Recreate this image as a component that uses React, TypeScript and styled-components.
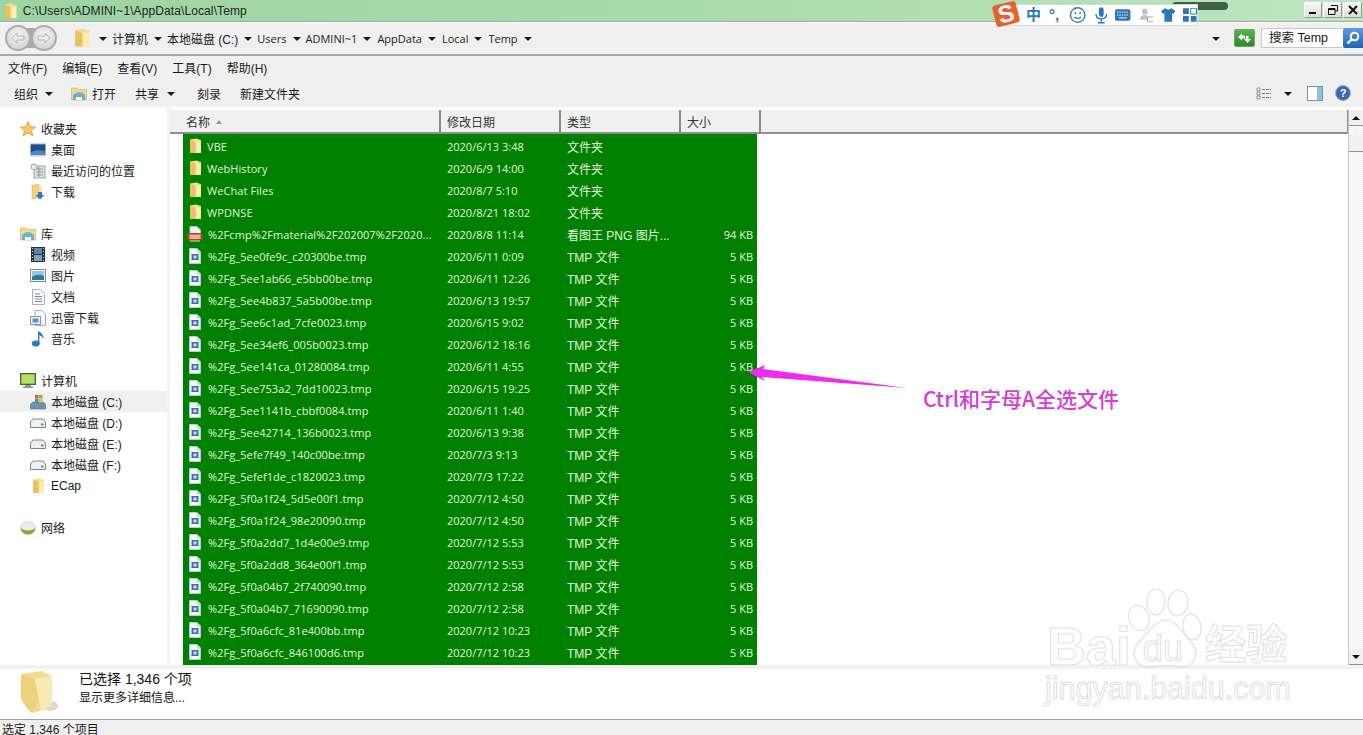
import React from "react";
import styled, { createGlobalStyle } from "styled-components";

const latin = `"Open Sans", "Noto Sans CJK SC", sans-serif`;

const GlobalStyle = createGlobalStyle`
  html, body {
    margin: 0;
    padding: 0;
    background: #fff;
  }
  body {
    font-family: "Liberation Sans", "Noto Sans CJK SC", sans-serif;
    font-size: 12px;
    color: #1a1a1a;
  }
`;

const Window = styled.div`
  position: relative;
  width: 1363px;
  height: 735px;
  overflow: hidden;
  display: flex;
  flex-direction: column;
  background: #fff;
`;

const TitleBar = styled.div`
  height: 21px;
  flex: none;
  display: flex;
  align-items: center;
  gap: 6px;
  padding-left: 4px;
  background: linear-gradient(90deg, #9dd4a3 0%, #a8dbad 50%, #bce6bf 100%);
`;

const TitleText = styled.span`
  font-size: 12px;
  letter-spacing: 0.1px;
  color: #222;
  flex: 1;
`;

const WindowControls = styled.div`
  display: flex;
  gap: 1px;
  margin: 0 1px 2px 0;
`;

const WinButton = styled.div<{ $w: number }>`
  width: ${(p) => p.$w}px;
  height: 16px;
  display: flex;
  align-items: center;
  justify-content: center;
  background: linear-gradient(#f8f8f8, #dcdcdc);
  border: 1px solid #8aa08c;
  border-top-color: #fff;
  border-left-color: #fff;
  box-sizing: border-box;
`;

const AddressBar = styled.div`
  height: 35px;
  flex: none;
  box-sizing: border-box;
  display: flex;
  align-items: center;
  background: #f0f0f0;
  border-top: 1px solid #a6a6a6;
  border-bottom: 2px solid #a8a8a8;
  box-shadow: inset 0 1px 0 #fff;
`;

const NavGroup = styled.div`
  display: flex;
  margin: 0 17px 0 5px;
  background: linear-gradient(#a9a9a9, #a9a9a9) center / 20px 20px no-repeat;
`;

const NavButton = styled.div`
  width: 26px;
  height: 26px;
  box-sizing: border-box;
  border-radius: 50%;
  border: 2px solid #acacac;
  background: radial-gradient(circle at 50% 35%, #f4f4f4, #d8d8d8 75%);
  display: flex;
  align-items: center;
  justify-content: center;
`;

const Crumbs = styled.div`
  flex: 1;
  display: flex;
  align-items: center;
  height: 100%;
`;

const Crumb = styled.span<{ $latin?: boolean }>`
  white-space: nowrap;
  color: #222;
  ${(p) => (p.$latin ? `font: 11px ${latin};` : "")}
`;

const Caret = styled.span<{ $l?: number; $r?: number }>`
  flex: none;
  width: 0;
  height: 0;
  border-left: 4px solid transparent;
  border-right: 4px solid transparent;
  border-top: 4px solid #1a1a1a;
  margin: 1px ${(p) => p.$r ?? 5}px 0 ${(p) => p.$l ?? 6}px;
`;

const RefreshBox = styled.div`
  width: 21px;
  height: 18px;
  margin: 0 6px 0 9px;
  display: flex;
  align-items: center;
  justify-content: center;
  background: linear-gradient(#57b34c, #2c8a25);
  border: 1px solid #7d9c78;
  box-sizing: border-box;
  border-radius: 2px;
`;

const SearchBox = styled.div`
  width: 82px;
  height: 20px;
  box-sizing: border-box;
  background: #fff;
  border: 1px solid #c8c8c8;
  border-right: none;
  padding-left: 7px;
  line-height: 19px;
  font-size: 12.5px;
`;

const SearchButton = styled.div`
  width: 20px;
  height: 20px;
  display: flex;
  align-items: center;
  justify-content: center;
  background: linear-gradient(#5f9be0, #1f63b8);
  border-radius: 2px 0 0 2px;
`;

const MenuBar = styled.div`
  height: 23px;
  flex: none;
  display: flex;
  align-items: center;
  gap: 15px;
  padding-left: 8px;
  background: #f0f0f0;
`;

const Toolbar = styled.div`
  height: 28px;
  flex: none;
  display: flex;
  align-items: center;
  padding: 0 12px 0 14px;
  background: #f0f0f0;
`;

const ToolText = styled.span<{ $ml?: number; $mr?: number }>`
  margin: 0 ${(p) => p.$mr ?? 0}px 0 ${(p) => p.$ml ?? 0}px;
  white-space: nowrap;
`;

const Spacer = styled.div`
  flex: 1;
`;

const Main = styled.div`
  flex: 1;
  min-height: 0;
  display: flex;
  background: #fff;
`;

const Sidebar = styled.nav`
  width: 167px;
  flex: none;
  padding-top: 11px;
  box-sizing: border-box;
`;

const NavSection = styled.div`
  margin-bottom: 21px;
`;

const NavItem = styled.div<{ $child?: boolean; $active?: boolean }>`
  height: 21px;
  display: flex;
  align-items: center;
  gap: 5px;
  padding-left: ${(p) => (p.$child ? 30 : 20)}px;
  background: ${(p) => (p.$active ? "#f0f0f0" : "transparent")};
  white-space: nowrap;
`;

const IconSlot = styled.span`
  width: 16px;
  flex: none;
  display: flex;
  align-items: center;
  justify-content: center;
`;

const Divider = styled.div`
  width: 3px;
  flex: none;
  background: #f4f4f4;
`;

const ListPane = styled.div`
  flex: 1;
  min-width: 0;
  display: flex;
  flex-direction: column;
`;

const ColumnHeader = styled.div`
  height: 24px;
  flex: none;
  box-sizing: border-box;
  display: flex;
  margin-top: 3px;
  background: #f0f0f0;
  border-bottom: 2px solid #8f8f8f;
  border-right: 1px solid #8f8f8f;
`;

const HeaderCell = styled.div<{ $w: number; $pad?: number }>`
  width: ${(p) => p.$w}px;
  flex: none;
  box-sizing: border-box;
  padding: 1px 0 0 ${(p) => p.$pad ?? 6}px;
  border-right: 2px solid #8c8c8c;
  display: flex;
  align-items: center;
  gap: 6px;
  color: #333;
`;

const SortMark = styled.span`
  width: 0;
  height: 0;
  border-left: 3px solid transparent;
  border-right: 3px solid transparent;
  border-bottom: 4px solid #9a9a9a;
`;

const Rows = styled.div`
  width: 574px;
  margin-left: 13px;
  flex: 1;
  min-height: 0;
  overflow: hidden;
  background: #008000;
  padding-top: 1px;
`;

const Row = styled.div`
  height: 22px;
  display: grid;
  grid-template-columns: 264px 120px 120px 70px;
  align-items: center;
  color: #e2f5dc;
`;

const NameCell = styled.div<{ $gap?: number }>`
  display: flex;
  align-items: center;
  gap: ${(p) => p.$gap ?? 5}px;
  padding-left: 4px;
  white-space: nowrap;
  font: 11px ${latin};
  letter-spacing: 0.08px;
`;

const DateCell = styled.span`
  font: 11px ${latin};
`;

const SizeCell = styled.div`
  text-align: right;
  padding-right: 4px;
  font: 11px ${latin};
`;

const Scrollbar = styled.div`
  width: 15px;
  flex: none;
  box-sizing: border-box;
  margin-top: 3px;
  display: flex;
  flex-direction: column;
  border-left: 1px solid #c4c4c4;
  background: repeating-conic-gradient(#f1f1f1 0 25%, #fdfdfd 0 50%) 0 0 / 2px 2px;
`;

const ScrollButton = styled.div`
  height: 16px;
  flex: none;
  display: flex;
  align-items: center;
  justify-content: center;
  background: #f0f0f0;
  border-bottom: 1px solid #8f8f8f;
  box-sizing: border-box;
`;

const ScrollThumb = styled.div`
  height: 17px;
  flex: none;
  margin-top: 9px;
  background: #f0f0f0;
  border-bottom: 1px solid #8f8f8f;
  box-sizing: border-box;
`;

const ScrollTrack = styled.div`
  flex: 1;
`;

const UpMark = styled.span`
  width: 0;
  height: 0;
  border-left: 4px solid transparent;
  border-right: 4px solid transparent;
  border-bottom: 4px solid #111;
`;

const DownMark = styled.span`
  width: 0;
  height: 0;
  border-left: 4px solid transparent;
  border-right: 4px solid transparent;
  border-top: 4px solid #111;
`;

const DetailsPane = styled.div`
  height: 55px;
  flex: none;
  box-sizing: border-box;
  display: flex;
  align-items: flex-start;
  gap: 21px;
  padding-left: 20px;
  background: #fff;
  border-top: 4px solid #f2f2f2;
  border-bottom: 1px solid #a0a0a0;
`;

const DetailsText = styled.div`
  display: flex;
  flex-direction: column;
  gap: 1px;
`;

const DetailsTitle = styled.div`
  font-size: 14px;
  line-height: 20px;
  color: #111;
`;

const DetailsHint = styled.div`
  line-height: 17px;
  color: #111;
`;

const BigFolder = styled.svg`
  margin-top: 1px;
`;

const StatusBar = styled.div`
  height: 15px;
  flex: none;
  background: #f0f0f0;
  padding-left: 2px;
  line-height: 21px;
  overflow: hidden;
`;

const ImeBar = styled.div`
  position: absolute;
  left: 1002px;
  top: 4px;
  width: 196px;
  height: 22px;
  box-sizing: border-box;
  display: flex;
  align-items: center;
  gap: 8px;
  padding-left: 23px;
  background: #fff;
  border: 1px solid #d8d8d8;
`;

const ImeLogo = styled.div`
  position: absolute;
  left: 994px;
  top: 3px;
  width: 24px;
  height: 22px;
  transform: rotate(-14deg);
  border-radius: 3px;
  background: #e8602c;
  color: #fff;
  font: bold 24px/22px "Liberation Sans", sans-serif;
  text-align: center;
`;

const ImeText = styled.span<{ $mr?: number }>`
  color: #2a78b8;
  font-weight: 700;
  font-size: 15px;
  line-height: 20px;
  margin-right: ${(p) => p.$mr ?? 0}px;
`;

const ImePill = styled.div`
  position: absolute;
  left: 1172px;
  top: 2px;
  width: 56px;
  height: 8px;
  border-radius: 4px;
  background: #3e5f48;
`;

const Annotation = styled.div`
  position: absolute;
  left: 923px;
  top: 385px;
  font: 500 21px/26px "Noto Sans CJK SC", sans-serif;
  color: #d63bd6;
  white-space: nowrap;
`;

const Arrow = styled.svg`
  position: absolute;
  left: 745px;
  top: 360px;
`;

const Watermark = styled.div`
  position: absolute;
  left: 1045px;
  top: 588px;
  width: 250px;
  height: 120px;
  pointer-events: none;
`;

const PawMark = styled.svg`
  position: absolute;
  left: 0;
  top: 0;
`;

const WatermarkLine = styled.div<{ $size: number; $top: number; $left: number; $bold?: boolean }>`
  position: absolute;
  top: ${(p) => p.$top}px;
  left: ${(p) => p.$left}px;
  font-size: ${(p) => p.$size}px;
  font-weight: ${(p) => (p.$bold ? 700 : 400)};
  line-height: 1;
  color: #fff;
  -webkit-text-stroke: 1px #e0e0e0;
  white-space: nowrap;
`;

const FolderIcon = ({ size = 16 }: { size?: number }) => (
  <svg width={size * 0.8} height={size} viewBox="0 0 13 16">
    <path d="M1 1.5 L8 0.5 L10 1.5 L12.5 2 V15 H2 Q1 15 1 14 Z" fill="#f4dd8c" />
    <path d="M1 2 L6.5 3.5 V15 H2 Q1 15 1 14 Z" fill="#e6c264" />
    <path d="M6.5 3.5 L8 9 L7.5 15 H12.5 V4 Z" fill="#fbeeb4" />
  </svg>
);

const LargeFolder = () => (
  <BigFolder width="38" height="43" viewBox="2 0 36 43" preserveAspectRatio="none">
    <ellipse cx="31" cy="36" rx="7" ry="5" fill="#d8d8d8" />
    <path d="M3 4 L22 1 L28 4 L32 6 V38 L13 43 Q6 36 3 28 Z" fill="#f2dd95" />
    <path d="M3 4 L16 9 L22 28 L13 43 Q6 36 3 28 Z" fill="#ecd27e" />
    <path d="M16 9 L32 6 V36 L22 40 Z" fill="#f8eab4" />
  </BigFolder>
);

const TmpIcon = () => (
  <svg width="14" height="16" viewBox="0 0 14 16">
    <path d="M1.5 .5 H9 L12.5 4 V15.5 H1.5 Z" fill="#fafdff" stroke="#b7c6d8" />
    <path d="M9 .5 V4 H12.5" fill="#dde7f2" stroke="#b7c6d8" />
    <rect x="4" y="6" width="6" height="6" fill="#3b6ea8" />
    <rect x="5.5" y="7.5" width="3" height="3" fill="#cfe0f2" />
    <path d="M3 6.5 L4 7 M3 9 H4 M3 11.5 L4 11 M10 7 L11 6.5 M10 9 H11 M10 11 L11 11.5" stroke="#3b6ea8" />
  </svg>
);

const PngIcon = () => (
  <svg width="16" height="16" viewBox="0 0 16 16">
    <path d="M3 .5 H10 L13.5 4 V9 H3 Z" fill="#eef2f7" stroke="#bcc6d2" />
    <rect x=".5" y="7" width="15" height="7.5" rx="1.5" fill="#b5432a" />
    <rect x="2.5" y="8.5" width="11" height="4.5" fill="#eeb19a" />
    <path d="M3 14.5 H13 V15.5 H3 Z" fill="#d9dee5" />
  </svg>
);

const Star = () => (
  <svg width="16" height="16" viewBox="0 0 16 16">
    <path d="M8 .5 L10.2 5.6 L15.6 6.1 L11.5 9.7 L12.8 15 L8 12.2 L3.2 15 L4.5 9.7 L.4 6.1 L5.8 5.6 Z" fill="#f6c668" stroke="#cf9536" strokeWidth=".7" />
  </svg>
);

const DesktopIcon = () => (
  <svg width="16" height="14" viewBox="0 0 16 14">
    <rect x=".5" y="1" width="15" height="11" fill="#1c4b8f" stroke="#9aa9bc" />
    <path d="M1 9 Q6 6 15 8 V11.5 H1 Z" fill="#4f86c8" />
    <rect x="1" y="12" width="14" height="1.5" fill="#c5cfdb" />
  </svg>
);

const RecentIcon = () => (
  <svg width="16" height="16" viewBox="0 0 16 16">
    <rect x="4" y="3" width="11" height="12" fill="#dfe3e4" stroke="#9aa5a6" />
    <path d="M6.5 6 H13 M6.5 9 H13 M6.5 12 H13 M9 4 V14" stroke="#8d9a9c" />
    <circle cx="4" cy="4" r="3" fill="#e8ecec" stroke="#9aa5a6" />
  </svg>
);

const DownloadIcon = () => (
  <svg width="16" height="16" viewBox="0 0 16 16">
    <path d="M2 1 L9 .5 V14 L2 15 Z" fill="#f0d27c" stroke="#d0ad55" strokeWidth=".5" />
    <path d="M9 1 L12 2 V9 H9 Z" fill="#f8e6a6" />
    <path d="M8 8 H12 V11 H14.5 L10 15.5 L5.5 11 H8 Z" fill="#2f78c8" />
  </svg>
);

const LibraryIcon = () => (
  <svg width="16" height="15" viewBox="0 0 16 15">
    <path d="M.5 2 H6 L7.5 3.5 H15.5 V14 H.5 Z" fill="#f2d98c" stroke="#c8ab60" strokeWidth=".6" />
    <path d="M2 9 Q8 3 14 9 V14 H2 Z" fill="#67b0d6" />
    <path d="M5 14 V11 H11 V14 Z" fill="#f4fafc" />
  </svg>
);

const VideoIcon = () => (
  <svg width="14" height="15" viewBox="0 0 14 15">
    <rect x="0" y="0" width="14" height="15" fill="#22303c" />
    <rect x="3" y="1" width="8" height="6" fill="#5e86a6" />
    <rect x="3" y="8" width="8" height="6" fill="#7fa3bf" />
    <path d="M1 1.5 H2 M1 4.5 H2 M1 7.5 H2 M1 10.5 H2 M1 13.5 H2 M12 1.5 H13 M12 4.5 H13 M12 7.5 H13 M12 10.5 H13 M12 13.5 H13" stroke="#d8dee2" />
  </svg>
);

const PictureIcon = () => (
  <svg width="16" height="13" viewBox="0 0 16 13">
    <rect x=".5" y=".5" width="15" height="12" fill="#f2f6f8" stroke="#7c8c98" />
    <rect x="2" y="2" width="12" height="9" fill="#9fc6d6" />
    <path d="M2 8 Q7 4 14 7 V11 H2 Z" fill="#2d7a94" />
  </svg>
);

const DocIcon = () => (
  <svg width="13" height="16" viewBox="0 0 13 16">
    <path d="M.5 .5 H8.5 L12.5 4.5 V15.5 H.5 Z" fill="#fafafa" stroke="#aab2ba" />
    <path d="M3 5 H8 M3 7.5 H10 M3 10 H10 M3 12.5 H10" stroke="#7f8a96" />
  </svg>
);

const ThunderIcon = () => (
  <svg width="16" height="16" viewBox="0 0 16 16">
    <path d="M5 .5 H12 L15.5 4 V15.5 H5 Z" fill="#f4f7fb" stroke="#9fb0c4" />
    <rect x=".5" y="6.5" width="10" height="8" fill="#eaf1f8" stroke="#7c98b8" />
    <rect x="2.5" y="8.5" width="6" height="4" fill="#5a92c8" />
  </svg>
);

const MusicIcon = () => (
  <svg width="14" height="16" viewBox="0 0 14 16">
    <path d="M7 .5 V12 L8.4 11.6 V4 Q11 5 12.5 8 Q12.5 3 8.4 .5 Z" fill="#2a78c4" />
    <ellipse cx="4.8" cy="12.6" rx="4" ry="3" fill="#2a78c4" />
  </svg>
);

const ComputerIcon = () => (
  <svg width="16" height="15" viewBox="0 0 16 15">
    <rect x=".5" y=".5" width="15" height="11" fill="#86c440" stroke="#4d5a60" />
    <rect x="2" y="2" width="12" height="8" fill="#b4e06a" />
    <path d="M5 12 H11 V13.5 H13 V15 H3 V13.5 H5 Z" fill="#8c969c" />
  </svg>
);

const SystemDriveIcon = () => (
  <svg width="16" height="16" viewBox="0 0 16 16">
    <path d="M.5 10 L3 8 H13 L15.5 10 V15 H.5 Z" fill="#6d93b4" stroke="#3f6079" strokeWidth=".5" />
    <rect x="5" y="1" width="3.5" height="3.5" fill="#e05a30" />
    <rect x="9" y="1" width="3.5" height="3.5" fill="#7fb83c" />
    <rect x="5" y="5" width="3.5" height="3.5" fill="#3c86d0" />
    <rect x="9" y="5" width="3.5" height="3.5" fill="#f0c030" />
  </svg>
);

const DriveIcon = () => (
  <svg width="16" height="10" viewBox="0 0 16 10">
    <path d="M.5 4 L3 1 H13 L15.5 4 V9.5 H.5 Z" fill="#eef0f1" stroke="#7e8588" />
    <rect x="11" y="5.5" width="2.5" height="2" fill="#7b8388" />
  </svg>
);

const NetworkIcon = () => (
  <svg width="16" height="15" viewBox="0 0 16 15">
    <ellipse cx="8" cy="8" rx="7.5" ry="6.5" fill="#e6ecea" stroke="#b5bdb8" strokeWidth=".5" />
    <path d="M.5 8 Q8 13 15.5 8 Q14 14.5 8 14.5 Q2 14.5 .5 8 Z" fill="#86a83a" />
  </svg>
);

const ViewsIcon = () => (
  <svg width="16" height="13" viewBox="0 0 16 13">
    <path d="M1 1 H4 V4 H1 Z M1 5 H4 V8 H1 Z M1 9 H4 V12 H1 Z" fill="#fff" stroke="#777" strokeWidth=".8" />
    <path d="M6 2.5 H15 M6 6.5 H15 M6 10.5 H15" stroke="#777" strokeDasharray="3 1" />
  </svg>
);

const PaneIcon = () => (
  <svg width="16" height="15" viewBox="0 0 16 15">
    <rect x=".5" y=".5" width="15" height="14" fill="#fff" stroke="#6f95b0" />
    <rect x="10" y="1" width="5" height="13" fill="#8cc0dc" />
  </svg>
);

const HelpIcon = () => (
  <svg width="16" height="16" viewBox="0 0 16 16">
    <circle cx="8" cy="8" r="7.5" fill="#3f66b0" stroke="#9fb0cc" />
    <text x="8" y="12" textAnchor="middle" fontSize="11" fontWeight="700" fill="#fff" fontFamily="Liberation Sans">?</text>
  </svg>
);

const ArrowGlyph = styled.svg<{ $flip?: boolean }>`
  transform: ${(p) => (p.$flip ? "scaleX(-1)" : "none")};
`;

const BackArrow = ({ flip }: { flip?: boolean }) => (
  <ArrowGlyph $flip={flip} width="14" height="12" viewBox="0 0 14 12">
    <path d="M6 1 L1 6 L6 11 V8 H13 V4 H6 Z" fill="#ececec" stroke="#b4b4b4" />
  </ArrowGlyph>
);

const folders = [
  ["VBE", "2020/6/13 3:48"],
  ["WebHistory", "2020/6/9 14:00"],
  ["WeChat Files", "2020/8/7 5:10"],
  ["WPDNSE", "2020/8/21 18:02"],
];

const tmpFiles = [
  ["%2Fg_5ee0fe9c_c20300be.tmp", "2020/6/11 0:09"],
  ["%2Fg_5ee1ab66_e5bb00be.tmp", "2020/6/11 12:26"],
  ["%2Fg_5ee4b837_5a5b00be.tmp", "2020/6/13 19:57"],
  ["%2Fg_5ee6c1ad_7cfe0023.tmp", "2020/6/15 9:02"],
  ["%2Fg_5ee34ef6_005b0023.tmp", "2020/6/12 18:16"],
  ["%2Fg_5ee141ca_01280084.tmp", "2020/6/11 4:55"],
  ["%2Fg_5ee753a2_7dd10023.tmp", "2020/6/15 19:25"],
  ["%2Fg_5ee1141b_cbbf0084.tmp", "2020/6/11 1:40"],
  ["%2Fg_5ee42714_136b0023.tmp", "2020/6/13 9:38"],
  ["%2Fg_5efe7f49_140c00be.tmp", "2020/7/3 9:13"],
  ["%2Fg_5efef1de_c1820023.tmp", "2020/7/3 17:22"],
  ["%2Fg_5f0a1f24_5d5e00f1.tmp", "2020/7/12 4:50"],
  ["%2Fg_5f0a1f24_98e20090.tmp", "2020/7/12 4:50"],
  ["%2Fg_5f0a2dd7_1d4e00e9.tmp", "2020/7/12 5:53"],
  ["%2Fg_5f0a2dd8_364e00f1.tmp", "2020/7/12 5:53"],
  ["%2Fg_5f0a04b7_2f740090.tmp", "2020/7/12 2:58"],
  ["%2Fg_5f0a04b7_71690090.tmp", "2020/7/12 2:58"],
  ["%2Fg_5f0a6cfc_81e400bb.tmp", "2020/7/12 10:23"],
  ["%2Fg_5f0a6cfc_846100d6.tmp", "2020/7/12 10:23"],
];

export default function App() {
  return (
    <Window>
      <GlobalStyle />
      <TitleBar>
        <FolderIcon />
        <TitleText>C:\Users\ADMINI~1\AppData\Local\Temp</TitleText>
        <WindowControls>
          <WinButton $w={18}>
            <svg width="8" height="8" viewBox="0 0 8 8"><path d="M0 6 H7 V8 H0 Z" fill="#111" /></svg>
          </WinButton>
          <WinButton $w={19}>
            <svg width="10" height="10" viewBox="0 0 10 10"><path d="M3 .5 H9.5 V6 H7 M.5 3.5 H7 V9.5 H.5 Z M.5 4.5 H7" fill="none" stroke="#111" /></svg>
          </WinButton>
          <WinButton $w={19}>
            <svg width="10" height="10" viewBox="0 0 10 10"><path d="M1 1 L9 9 M9 1 L1 9" stroke="#111" strokeWidth="2" /></svg>
          </WinButton>
        </WindowControls>
      </TitleBar>

      <AddressBar>
        <NavGroup>
          <NavButton><BackArrow /></NavButton>
          <NavButton><BackArrow flip /></NavButton>
        </NavGroup>
        <Crumbs>
          <FolderIcon size={20} />
          <Caret $l={9} />
          <Crumb>计算机</Crumb>
          <Caret />
          <Crumb>本地磁盘 (C:)</Crumb>
          <Caret />
          <Crumb $latin>Users</Crumb>
          <Caret />
          <Crumb $latin>ADMINI~1</Crumb>
          <Caret $r={6} />
          <Crumb $latin>AppData</Crumb>
          <Caret $r={6} />
          <Crumb $latin>Local</Crumb>
          <Caret $r={6} />
          <Crumb $latin>Temp</Crumb>
          <Caret />
        </Crumbs>
        <Caret />
        <RefreshBox>
          <svg width="15" height="12" viewBox="0 0 15 12">
            <path d="M1 5 L5 1.5 V3.5 H8 V6.5 H5 V8.5 Z M9 4 H11.5 V7 H14 L10.5 11 L7 7 H9 Z" fill="#fff" />
          </svg>
        </RefreshBox>
        <SearchBox>搜索 Temp</SearchBox>
        <SearchButton>
          <svg width="14" height="14" viewBox="0 0 14 14">
            <circle cx="8.5" cy="5.5" r="3.8" fill="none" stroke="#fff" strokeWidth="2" />
            <path d="M6 8 L1.5 12.5" stroke="#fff" strokeWidth="2.4" />
          </svg>
        </SearchButton>
      </AddressBar>

      <MenuBar>
        <span>文件(F)</span>
        <span>编辑(E)</span>
        <span>查看(V)</span>
        <span>工具(T)</span>
        <span>帮助(H)</span>
      </MenuBar>

      <Toolbar>
        <ToolText>组织</ToolText>
        <Caret $l={7} $r={18} />
        <LibraryIcon />
        <ToolText $ml={5} $mr={19}>打开</ToolText>
        <ToolText>共享</ToolText>
        <Caret $l={8} $r={22} />
        <ToolText $mr={19}>刻录</ToolText>
        <ToolText>新建文件夹</ToolText>
        <Spacer />
        <ViewsIcon />
        <Caret $l={12} $r={15} />
        <PaneIcon />
        <ToolText $ml={12} />
        <HelpIcon />
      </Toolbar>

      <Main>
        <Sidebar>
          <NavSection>
            <NavItem><IconSlot><Star /></IconSlot>收藏夹</NavItem>
            <NavItem $child><IconSlot><DesktopIcon /></IconSlot>桌面</NavItem>
            <NavItem $child><IconSlot><RecentIcon /></IconSlot>最近访问的位置</NavItem>
            <NavItem $child><IconSlot><DownloadIcon /></IconSlot>下载</NavItem>
          </NavSection>
          <NavSection>
            <NavItem><IconSlot><LibraryIcon /></IconSlot>库</NavItem>
            <NavItem $child><IconSlot><VideoIcon /></IconSlot>视频</NavItem>
            <NavItem $child><IconSlot><PictureIcon /></IconSlot>图片</NavItem>
            <NavItem $child><IconSlot><DocIcon /></IconSlot>文档</NavItem>
            <NavItem $child><IconSlot><ThunderIcon /></IconSlot>迅雷下载</NavItem>
            <NavItem $child><IconSlot><MusicIcon /></IconSlot>音乐</NavItem>
          </NavSection>
          <NavSection>
            <NavItem><IconSlot><ComputerIcon /></IconSlot>计算机</NavItem>
            <NavItem $child $active><IconSlot><SystemDriveIcon /></IconSlot>本地磁盘 (C:)</NavItem>
            <NavItem $child><IconSlot><DriveIcon /></IconSlot>本地磁盘 (D:)</NavItem>
            <NavItem $child><IconSlot><DriveIcon /></IconSlot>本地磁盘 (E:)</NavItem>
            <NavItem $child><IconSlot><DriveIcon /></IconSlot>本地磁盘 (F:)</NavItem>
            <NavItem $child><IconSlot><FolderIcon /></IconSlot>ECap</NavItem>
          </NavSection>
          <NavSection>
            <NavItem><IconSlot><NetworkIcon /></IconSlot>网络</NavItem>
          </NavSection>
        </Sidebar>
        <Divider />
        <ListPane>
          <ColumnHeader>
            <HeaderCell $w={271} $pad={16}>名称<SortMark /></HeaderCell>
            <HeaderCell $w={120}>修改日期</HeaderCell>
            <HeaderCell $w={120}>类型</HeaderCell>
            <HeaderCell $w={80}>大小</HeaderCell>
          </ColumnHeader>
          <Rows>
            {folders.map(([name, date]) => (
              <Row key={name}>
                <NameCell $gap={4}><IconSlot><FolderIcon /></IconSlot>{name}</NameCell>
                <DateCell>{date}</DateCell>
                <span>文件夹</span>
                <span />
              </Row>
            ))}
            <Row>
              <NameCell><IconSlot><PngIcon /></IconSlot>%2Fcmp%2Fmaterial%2F202007%2F2020...</NameCell>
              <DateCell>2020/8/8 11:14</DateCell>
              <span>看图王 PNG 图片...</span>
              <SizeCell>94 KB</SizeCell>
            </Row>
            {tmpFiles.map(([name, date]) => (
              <Row key={name}>
                <NameCell><IconSlot><TmpIcon /></IconSlot>{name}</NameCell>
                <DateCell>{date}</DateCell>
                <span>TMP 文件</span>
                <SizeCell>5 KB</SizeCell>
              </Row>
            ))}
          </Rows>
        </ListPane>
        <Scrollbar>
          <ScrollButton><UpMark /></ScrollButton>
          <ScrollThumb />
          <ScrollTrack />
          <ScrollButton><DownMark /></ScrollButton>
        </Scrollbar>
      </Main>

      <DetailsPane>
        <LargeFolder />
        <DetailsText>
          <DetailsTitle>已选择 1,346 个项</DetailsTitle>
          <DetailsHint>显示更多详细信息...</DetailsHint>
        </DetailsText>
      </DetailsPane>
      <StatusBar>选定 1,346 个项目</StatusBar>

      <ImePill />
      <ImeBar>
        <ImeText>中</ImeText>
        <ImeText $mr={2}>°,</ImeText>
        <svg width="18" height="18" viewBox="0 0 18 18">
          <circle cx="9" cy="9" r="7.5" fill="none" stroke="#2a78b8" strokeWidth="1.4" />
          <circle cx="6.5" cy="7" r="1" fill="#2a78b8" />
          <circle cx="11.5" cy="7" r="1" fill="#2a78b8" />
          <path d="M5.5 11 Q9 14 12.5 11" fill="none" stroke="#2a78b8" strokeWidth="1.3" />
        </svg>
        <svg width="13" height="17" viewBox="0 0 13 17">
          <rect x="4" y="0" width="5" height="10" rx="2.5" fill="#2a78b8" />
          <path d="M1 7 Q1 12 6.5 12 Q12 12 12 7 M6.5 12 V15 M3 16 H10" fill="none" stroke="#2a78b8" strokeWidth="1.4" />
        </svg>
        <svg width="16" height="12" viewBox="0 0 16 12">
          <rect x="0" y="0" width="16" height="12" rx="2" fill="#2a78b8" />
          <path d="M2 3 H14 M2 6 H14" stroke="#fff" strokeDasharray="1.5 1" />
          <path d="M4 9 H12" stroke="#fff" />
        </svg>
        <svg width="15" height="15" viewBox="0 0 15 15">
          <circle cx="6" cy="3.5" r="3" fill="#b8c4cc" />
          <path d="M1 12 Q1 7 6 7 Q10 7 10 12 Z" fill="#b8c4cc" />
          <rect x="9" y="9" width="6" height="5" fill="#fff" stroke="#9aa8b2" />
        </svg>
        <svg width="15" height="14" viewBox="0 0 15 14">
          <path d="M4 0 L7.5 1.5 L11 0 L15 3 L13 6 L11.5 5 V14 H3.5 V5 L2 6 L0 3 Z" fill="#2a78b8" />
        </svg>
        <svg width="14" height="14" viewBox="0 0 14 14">
          <rect x="0" y="0" width="6" height="6" fill="#2a78b8" />
          <rect x="8" y="0" width="6" height="6" fill="none" stroke="#2a78b8" />
          <rect x="0" y="8" width="6" height="6" fill="#2a78b8" />
          <rect x="8" y="8" width="6" height="6" fill="#2a78b8" />
        </svg>
      </ImeBar>
      <ImeLogo>S</ImeLogo>

      <Arrow width="165" height="30" viewBox="0 0 165 30">
        <path d="M3 12 L20 5 L18 9 L162 28 L17 17 L20 21 Z" fill="#ee2bee" />
      </Arrow>
      <Annotation>Ctrl和字母A全选文件</Annotation>

      <Watermark>
        <PawMark width="250" height="100" viewBox="0 0 250 100" fill="none" stroke="#e0e0e0" strokeWidth="1.2">
          <ellipse cx="111" cy="14" rx="9" ry="13" />
          <ellipse cx="133" cy="15" rx="10" ry="13" transform="rotate(6 133 15)" />
          <ellipse cx="94" cy="30" rx="10" ry="13" transform="rotate(-20 94 30)" />
          <ellipse cx="147" cy="39" rx="9" ry="13" transform="rotate(-10 147 39)" />
          <path d="M120 32 C108 34 102 46 94 54 C84 66 90 80 106 79 C116 78 124 76 134 79 C150 81 156 64 146 54 C138 46 132 32 120 32 Z" />
        </PawMark>
        <WatermarkLine $size={54} $top={31} $left={2} $bold>Bai</WatermarkLine>
        <WatermarkLine $size={36} $top={43} $left={98}>du</WatermarkLine>
        <WatermarkLine $size={41} $top={37} $left={160} $bold>经验</WatermarkLine>
        <WatermarkLine $size={30.5} $top={85} $left={0}>jingyan.baidu.com</WatermarkLine>
      </Watermark>
    </Window>
  );
}
